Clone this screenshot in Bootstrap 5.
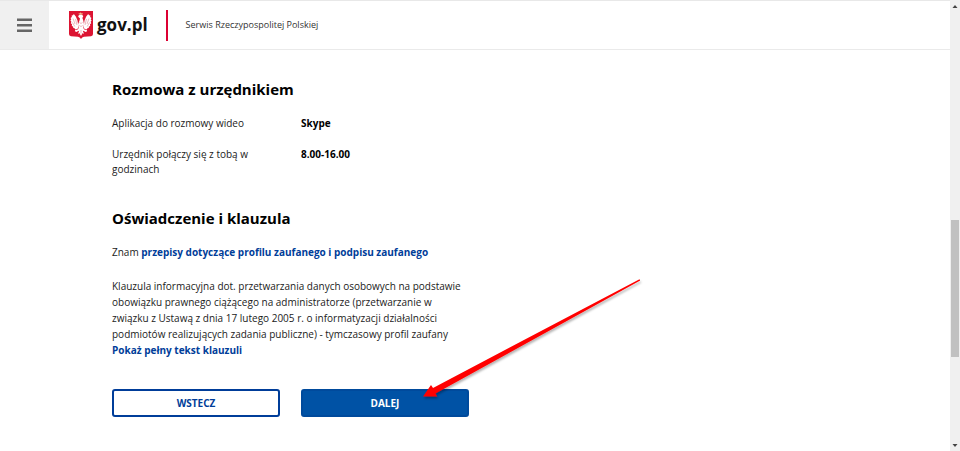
<!DOCTYPE html>
<html lang="pl">
<head>
<meta charset="utf-8">
<meta name="viewport" content="width=device-width, initial-scale=1">
<title>gov.pl - Serwis Rzeczypospolitej Polskiej</title>
<link href="https://cdn.jsdelivr.net/npm/bootstrap@5.3.0/dist/css/bootstrap.min.css" rel="stylesheet">
<style>
  body { font-family: "Open Sans", "Noto Sans", sans-serif; font-size: 10px; line-height: 16px; color: #1b1b1b; background: #fff; }
  .topbar { height: 50px; border-top: 1px solid #e8e8e8; border-bottom: 1px solid #eaeaea; }
  .menu-btn { width: 49px; background: #f0f0f0; border: 0; }
  .brand { font-size: 17px; line-height: 24px; font-weight: 700; color: #111; margin-left: 20px; gap: 4px; }
  .brand:hover { color: #111; }
  .brand-rule { width: 2px; height: 31px; background: #dc0032; margin-left: 18px; }
  .tagline { font-size: 9px; margin-left: 18px; color: #333; }
  .content { padding: 27px 16px 32px 112px; }
  .form-col { max-width: 357px; }
  .section-title { font-size: 15px; line-height: 24px; font-weight: 700; color: #000; }
  .pairs { display: grid; grid-template-columns: 1fr 1fr; column-gap: 21px; row-gap: 16px; line-height: 15px; margin: 15px 0 29px; }
  .pairs dt { font-weight: 400; }
  .pairs dd { font-weight: 700; color: #000; margin: 0; }
  .rules-line { margin: 14px 0 18px; }
  .gov-link { color: #003d99; font-weight: 700; text-decoration: none; }
  .actions { display: grid; grid-template-columns: 1fr 1fr; gap: 21px; margin-top: 31px; }
  .gov-btn { height: 28px; padding: 0; font-size: 10px; line-height: 16px; font-weight: 700; border: 2px solid #003d99; border-radius: 3px; color: #003d99; background: #fff; }
  .gov-btn-main { background: #0052a5; color: #fff; border-color: #004a9c; }
  .arrow { left: 310px; top: -111px; pointer-events: none; }
  .scroll-track { width: 10px; background: #f0f0f0; }
  .scroll-thumb { background: #c1c1c1; flex: 137 0 0; margin: 0 1px; }
  .space-above { flex: 208 0 0; }
  .space-below { flex: 82 0 0; }
</style>
<script src="https://cdn.jsdelivr.net/npm/bootstrap@5.3.0/dist/js/bootstrap.bundle.min.js"></script>
</head>
<body>
<div class="d-flex min-vh-100">
  <div class="flex-grow-1">
    <header class="topbar d-flex align-items-stretch">
      <button type="button" class="menu-btn d-flex align-items-center justify-content-center p-0" aria-label="Menu">
        <svg width="17" height="14" viewBox="0 0 17 14" fill="#666"><path d="M1 .5h15v2.500H1zM1 6h15v2.500H1zM1 11.500h15v2.500H1z"/></svg>
      </button>
      <div class="d-flex align-items-center">
        <a href="#" class="brand d-flex align-items-center text-decoration-none">
          <svg width="24" height="28" viewBox="0 0 24 28" aria-hidden="true">
            <path d="M0 0h24v23q0 2-2 2.200l-7 .5q-2 .3-3 2.300q-1-2-3-2.300l-7-.5Q0 25 0 23z" fill="#dc1432"/>
            <!-- wings -->
            <path id="wing" d="M9.300 15L8.500 9.500 6.800 5.500 4.800 3 4 4.200 2.600 4.500l.3 1.400-1.400 1 .8 1.300-.9 1.400 1 1.200-.6 1.500 1.200 1-.2 1.600 1.300.6.200 1.600 1.300.2.700 1.300 1.300-.6L9 17.500z" fill="#fff"/>
            <path d="M14.700 15l.8-5.500 1.700-4L19.200 3l.8 1.200 1.400.3-.3 1.400 1.400 1-.8 1.300.9 1.400-1 1.200.6 1.500-1.200 1 .2 1.600-1.300.6-.2 1.600-1.300.2-.7 1.300-1.300-.6-1.400-.5z" fill="#fff"/>
            <path d="M4 7.500l2 5.500M3.500 11.500l2.300 4M6.500 8l1.500 6M20 7.500L18 13M20.500 11.500l-2.300 4M17.500 8L16 14" fill="none" stroke="#e69aa4" stroke-width=".7"/>
            <!-- head, body and tail -->
            <path d="M10.500 9.500L11 7.500 9.200 5.800l.5-1.600 1.800-.7 1.700.3 1 1.500-.8 1.800.9 2.400.7 4-.7 3.500 1 1.500 2.500.4.300 1.300-1.500.8-1.800-1-1-.3 1.200 3-1.600-.5-1.400 2.800-1.400-2.800-1.600.5 1.200-3-1 .3-1.800 1-1.500-.8.300-1.300 2.500-.4 1-1.500L9 13.500z" fill="#fff"/>
            <path d="M10.500 11.500l1.500 1 1.500-1M10.300 14.500l1.700 1 1.700-1M12 19v3.500" fill="none" stroke="#e69aa4" stroke-width=".7"/>
            <path d="M10 3.400l-.4-1.500 1.200.5.900-1.200.9 1.200 1.200-.5-.4 1.500z" fill="#efc08a"/>
          </svg>
          <span>gov.pl</span>
        </a>
        <div class="brand-rule"></div>
        <div class="tagline">Serwis Rzeczypospolitej Polskiej</div>
      </div>
    </header>

    <main class="content">
      <div class="form-col">
        <h2 class="section-title mb-0">Rozmowa z urzędnikiem</h2>
        <dl class="pairs">
          <dt>Aplikacja do rozmowy wideo</dt><dd>Skype</dd>
          <dt>Urzędnik połączy się z tobą w godzinach</dt><dd>8.00-16.00</dd>
        </dl>
        <h2 class="section-title mb-0">Oświadczenie i klauzula</h2>
        <p class="rules-line">Znam <a href="#" class="gov-link">przepisy dotyczące profilu zaufanego i podpisu zaufanego</a></p>
        <p class="mb-0">Klauzula informacyjna dot. przetwarzania danych osobowych na podstawie obowiązku prawnego ciążącego na administratorze (przetwarzanie w związku z Ustawą z dnia 17 lutego 2005 r. o informatyzacji działalności podmiotów realizujących zadania publiczne) - tymczasowy profil zaufany</p>
        <a href="#" class="gov-link">Pokaż pełny tekst klauzuli</a>
        <div class="actions position-relative">
          <button type="button" class="btn gov-btn">WSTECZ</button>
          <button type="button" class="btn gov-btn gov-btn-main">DALEJ</button>
          <svg class="arrow position-absolute" width="222" height="124" viewBox="0 0 222 124" aria-hidden="true">
            <defs><filter id="soft" x="-5%" y="-5%" width="110%" height="115%"><feDropShadow dx="1" dy="2" stdDeviation="1" flood-color="#000" flood-opacity=".3"/></filter></defs>
            <path d="M1 118.500l8-11.500 2 3L217.500 1.200l.7 1.200L13.500 115.500l1.800 3z" fill="#f00" filter="url(#soft)"/>
          </svg>
        </div>
      </div>
    </main>
  </div>

  <div class="scroll-track d-flex flex-column align-items-center flex-shrink-0" aria-hidden="true">
    <svg width="10" height="12" viewBox="0 0 10 12"><path d="M2.500 8L5 5l2.500 3z" fill="#444"/></svg>
    <div class="space-above"></div>
    <div class="scroll-thumb align-self-stretch"></div>
    <div class="space-below"></div>
    <svg width="10" height="12" viewBox="0 0 10 12"><path d="M2.500 5h5L5 8z" fill="#444"/></svg>
  </div>
</div>
</body>
</html>
